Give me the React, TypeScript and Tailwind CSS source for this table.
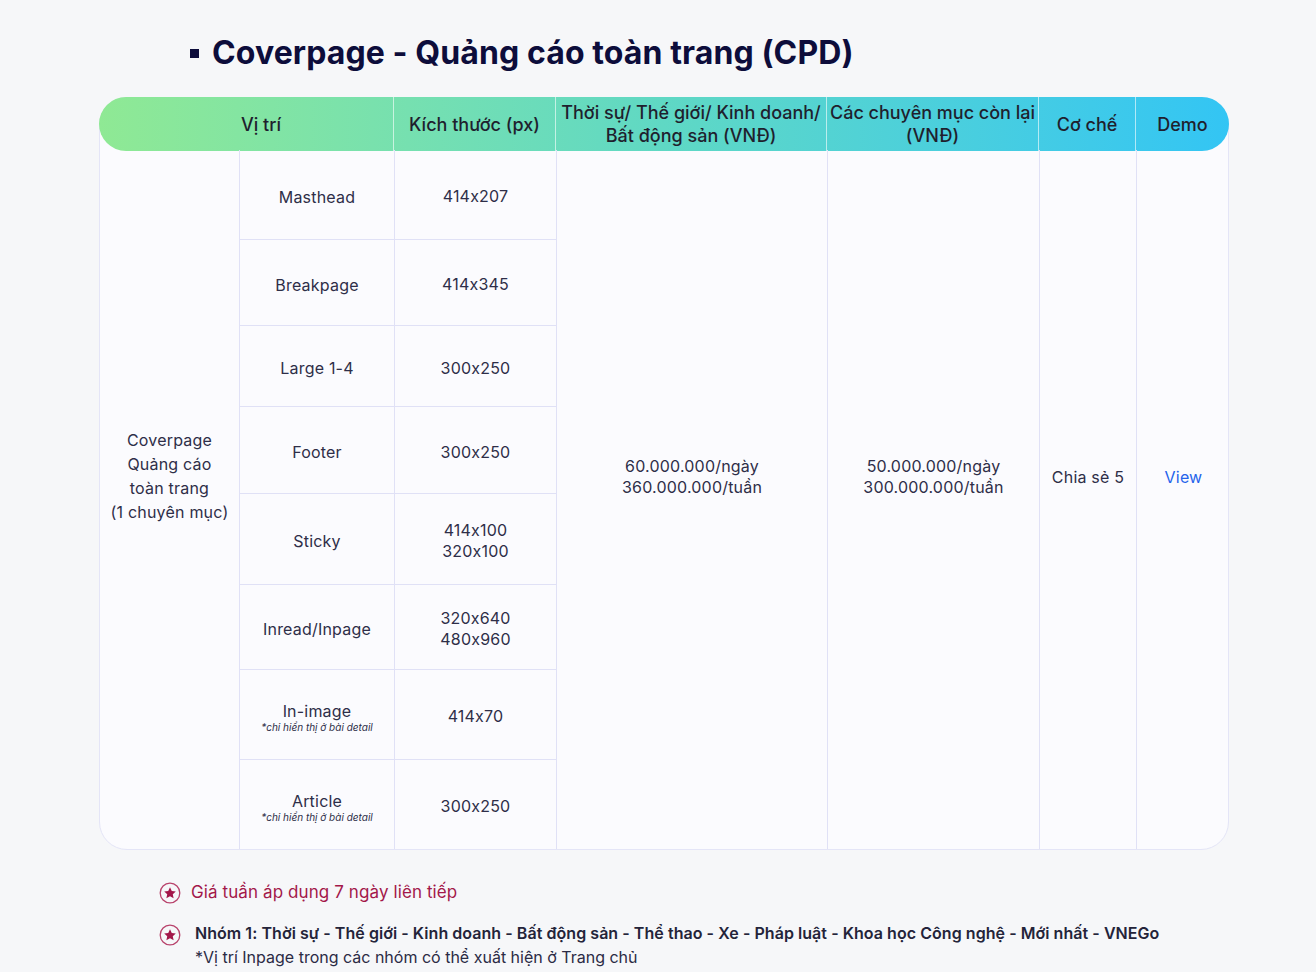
import React from 'react'

const font = { fontFamily: 'Inter, "Noto Sans", sans-serif' }

interface Slot {
  name: string
  note?: string
  sizes: string[]
  h: string
}

const slots: Slot[] = [
  { name: 'Masthead', sizes: ['414x207'], h: 'h-[90px]' },
  { name: 'Breakpage', sizes: ['414x345'], h: 'h-[86px]' },
  { name: 'Large 1-4', sizes: ['300x250'], h: 'h-[81px]' },
  { name: 'Footer', sizes: ['300x250'], h: 'h-[87px]' },
  { name: 'Sticky', sizes: ['414x100', '320x100'], h: 'h-[91px]' },
  { name: 'Inread/Inpage', sizes: ['320x640', '480x960'], h: 'h-[85px]' },
  { name: 'In-image', note: '*chỉ hiển thị ở bài detail', sizes: ['414x70'], h: 'h-[90px]' },
  { name: 'Article', note: '*chỉ hiển thị ở bài detail', sizes: ['300x250'], h: 'h-[89px]' },
]

const StarBadge = () => (
  <svg width="22" height="22" viewBox="0 0 22 22" className="shrink-0">
    <circle cx="11" cy="11" r="9.8" fill="none" stroke="#b8436c" strokeWidth="1.3" />
    <path
      d="M11 5.2l1.75 3.75 4.05.45-3.02 2.78.84 4.02L11 14.15 7.38 16.2l.84-4.02L5.2 9.4l4.05-.45z"
      fill="#a3174a"
    />
  </svg>
)

export default function App() {
  return (
    <div
      className="min-h-[972px] w-full bg-[#f6f7f9] text-[#2e2e48] [font-feature-settings:'calt'_0]"
      style={font}
    >
      <div className="flex items-center gap-[13px] pl-[190px] pt-[33px]">
        <span className="h-[9px] w-[9px] bg-[#0d0d3b]" />
        <h1 className="text-[32px] font-bold leading-[40px] tracking-[0.1px] text-[#0d0d3b]">
          Coverpage - Quảng cáo toàn trang (CPD)
        </h1>
      </div>

      <div className="ml-[99px] mt-[24px] w-[1130px] rounded-[28px] border border-[#e4e5f7] bg-[#fbfbfe]">
        {/* header */}
        <div className="-m-px grid h-[54px] grid-cols-[295px_162px_271px_212px_97px_93px] rounded-full bg-gradient-to-r from-[#8fe994] via-[#5fd8c4] to-[#33c5f4] text-[18px] font-medium text-[#1f1f2e]">
          <div className="flex items-center justify-center border-r border-white/60 pl-[30px]">Vị trí</div>
          <div className="flex items-center justify-center border-r border-white/60">Kích thước (px)</div>
          <div className="flex items-center justify-center whitespace-nowrap border-r border-white/60 text-center leading-[23px]">
            Thời sự/ Thế giới/ Kinh doanh/<br />Bất động sản (VNĐ)
          </div>
          <div className="flex items-center justify-center whitespace-nowrap border-r border-white/60 text-center leading-[23px]">
            Các chuyên mục còn lại<br />(VNĐ)
          </div>
          <div className="flex items-center justify-center border-r border-white/60">Cơ chế</div>
          <div className="flex items-center justify-center">Demo</div>
        </div>

        {/* body */}
        <div className="grid grid-cols-[140px_155px_162px_271px_212px_97px_93px] text-[16px] tracking-[0.2px]">
          <div className="row-span-8 flex items-center justify-center border-r border-[#e0e1f6] pb-[48px] text-center leading-[24px]">
            Coverpage<br />Quảng cáo<br />toàn trang<br />(1 chuyên mục)
          </div>
          {slots.map((s, i) => (
            <React.Fragment key={s.name}>
              <div
                className={`${s.h} flex flex-col items-center justify-center border-r border-[#e0e1f6] pt-[4px] ${i < slots.length - 1 ? 'border-b' : ''}`}
                style={{ gridColumn: 2, gridRow: i + 1 }}
              >
                <span className="leading-[20px]">{s.name}</span>
                {s.note && <span className="text-[10px] italic leading-[12px] tracking-normal">{s.note}</span>}
              </div>
              <div
                className={`${s.h} flex flex-col items-center justify-center border-r border-[#e0e1f6] pt-[4px] leading-[21px] ${i < slots.length - 1 ? 'border-b' : ''}`}
                style={{ gridColumn: 3, gridRow: i + 1 }}
              >
                {s.sizes.map((z) => (
                  <span key={z}>{z}</span>
                ))}
              </div>
            </React.Fragment>
          ))}
          <div className="col-start-4 row-span-8 row-start-1 flex flex-col items-center justify-center border-r border-[#e0e1f6] pb-[46px] leading-[21px]">
            <span>60.000.000/ngày</span>
            <span>360.000.000/tuần</span>
          </div>
          <div className="col-start-5 row-span-8 row-start-1 flex flex-col items-center justify-center border-r border-[#e0e1f6] pb-[46px] leading-[21px]">
            <span>50.000.000/ngày</span>
            <span>300.000.000/tuần</span>
          </div>
          <div className="col-start-6 row-span-8 row-start-1 flex items-center justify-center border-r border-[#e0e1f6] pb-[46px]">
            Chia sẻ 5
          </div>
          <div className="col-start-7 row-span-8 row-start-1 flex items-center justify-center pb-[46px] text-[#2563eb]">
            View
          </div>
        </div>
      </div>

      <div className="ml-[159px] mt-[30px] flex flex-col gap-[15px] text-[16px]">
        <div className="flex items-center gap-[10px]">
          <StarBadge />
          <span className="text-[17px] tracking-[0.1px] text-[#a3174a]">Giá tuần áp dụng 7 ngày liên tiếp</span>
        </div>
        <div className="flex items-start gap-[14px]">
          <div className="pt-[3px]">
            <StarBadge />
          </div>
          <div className="leading-[24px]">
            <div className="font-semibold tracking-[0.05px] text-[#24243a]">
              Nhóm 1: Thời sự - Thế giới - Kinh doanh - Bất động sản - Thể thao - Xe - Pháp luật - Khoa học Công nghệ - Mới nhất - VNEGo
            </div>
            <div className="text-[#2b2b45]">*Vị trí Inpage trong các nhóm có thể xuất hiện ở Trang chủ</div>
          </div>
        </div>
      </div>
    </div>
  )
}
